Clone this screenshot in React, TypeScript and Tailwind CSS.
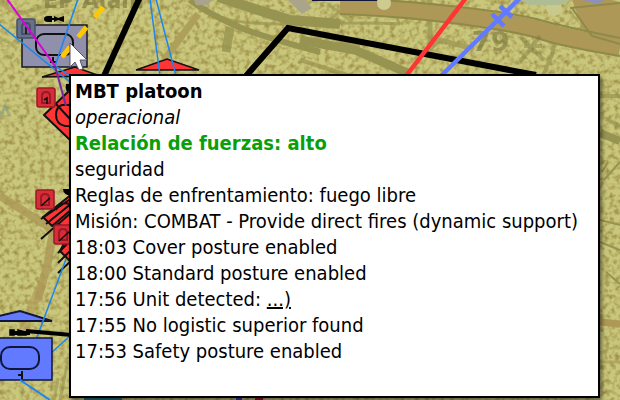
import React from "react";

const events = [
  { time: "18:03", text: "Cover posture enabled" },
  { time: "18:00", text: "Standard posture enabled" },
  { time: "17:56", text: "Unit detected: ", link: "...)" },
  { time: "17:55", text: "No logistic superior found" },
  { time: "17:53", text: "Safety posture enabled" },
];

function Terrain() {
  return (
    <g>
      <rect width="1240" height="800" fill="#c9c77c" />
      <rect width="1240" height="800" filter="url(#speckle)" />
      <g fill="none" stroke="#979350">
        <path d="M190 0 Q206 12 232 24 T320 52" strokeWidth="6" />
        <path d="M202 10 Q228 26 300 24 T400 24" strokeWidth="3" opacity=".7" />
        <path d="M218 -3 L258 10 L290 20 L340 24" strokeWidth="10" />
        <path d="M230 27 L226 52" strokeWidth="9" opacity=".8" />
        <path d="M300 40 L355 50 L410 74" strokeWidth="9" />
        <path d="M300 28 L360 47 M300 60 L350 76" strokeWidth="4" opacity=".7" />
        <path d="M430 0 V48 M415 60 L440 40 L470 48" strokeWidth="5" opacity=".7" />
        <path d="M328 4 L352 22 M350 2 L330 20" strokeWidth="3" opacity=".6" />
        <path d="M556 36 L552 55 L542 78" strokeWidth="4" opacity=".7" />
        <path d="M0 2 L18 14 L70 0" strokeWidth="4" opacity=".5" />
        <path d="M600 133 L620 141" strokeWidth="8" />
        <path d="M606 119 L620 126 M600 96 H620" strokeWidth="4" opacity=".7" />
        <path d="M604 180 L620 162 M602 172 L608 162 M600 220 L620 225 M600 242 L620 250 M606 272 L620 284" strokeWidth="2" />
        <path d="M0 38 L12 44 L28 32" strokeWidth="3" opacity=".5" />
        <path d="M58 378 L54 400 M68 360 L60 400" strokeWidth="3" opacity=".6" />
      </g>
      <path d="M198 14 L164 60" stroke="#aca05a" strokeWidth="7" fill="none" />
      <g fill="none" stroke="#ad9857">
        <path d="M340 6 Q400 8 460 16 T540 30 T620 48" strokeWidth="17" />
        <path d="M575 -4 L620 6 V44 L590 38 Z" strokeWidth="8" fill="#ad9857" />
        <path d="M0 196 L38 220 L53 230 L48 262 L38 300" strokeWidth="8" opacity=".8" />
        <path d="M42 284 Q30 310 24 330" strokeWidth="9" opacity=".6" />
        <path d="M600 322 L620 324" strokeWidth="7" />
        <path d="M600 362 H620" strokeWidth="3" opacity=".7" />
      </g>
      <g fill="none" stroke="#8f8a49" strokeWidth="2">
        <path d="M340 -2 Q400 0 460 7 T540 20 T620 38" />
        <path d="M340 14 Q400 16 460 24 T540 39 T620 56" />
        <path d="M572 8 L592 36 L620 44 M570 8 L620 3" />
      </g>
      <circle cx="384" cy="3" r="7" fill="#cdcb8d" />
      <circle cx="554" cy="8" r="8" fill="#c8c98a" />
      <path d="M288 0 H305 L312 8 L302 14 Z M194 0 H212 L208 5 H196 Z" fill="#aaa58a" />
      <path d="M583 0 H604 L597 4 Z" fill="#8b90bd" />
      <path d="M520 0 H570 L560 5 H530 Z" fill="#aebd94" />
      <rect x="312" y="-4" width="65" height="5" fill="#101638" />
      <g fill="#77733d" opacity=".6" fontFamily="'DejaVu Sans', sans-serif" fontWeight="bold">
        <text x="43" y="8" fontSize="22">EP Alam</text>
        <text x="472" y="51" fontSize="27">79</text>
      </g>
      <path d="M520 36 L544 60 M540 36 L520 62 M524 46 H542" stroke="#77733d" strokeWidth="4" opacity=".4" fill="none" />
      <path d="M0 118 L5 106 L10 116" stroke="#8ba083" strokeWidth="3" fill="none" opacity=".6" />
    </g>
  );
}

function Badge({ x, y, fill, stroke, glyph }: { x: number; y: number; fill: string; stroke: string; glyph: string }) {
  return (
    <g transform={`translate(${x} ${y})`}>
      <rect width="18" height="19" rx="2" fill={fill} stroke={stroke} strokeWidth="1.5" />
      <path d="M5 15 V8 Q5 4 9 4 Q13 4 13 8 V15 Z" fill="none" stroke={stroke} strokeWidth="2" />
      <path d={glyph} fill="none" stroke="#111" strokeWidth="1.6" />
    </g>
  );
}

function BattleMap() {
  return (
    <svg className="absolute inset-0 h-full w-full" viewBox="0 0 620 400" preserveAspectRatio="xMinYMin slice" aria-hidden="true">
      <defs>
        <filter id="speckle" x="0" y="0" width="100%" height="100%" colorInterpolationFilters="sRGB">
          <feTurbulence type="fractalNoise" baseFrequency="0.2" numOctaves="2" seed="8" />
          <feColorMatrix values="0 0 0 0 .62  0 0 0 0 .56  0 0 0 0 .28  2.4 0 0 0 -1" />
        </filter>
      </defs>
      <Terrain />
      <g fill="none" stroke="#000">
        <path d="M140 -3 L104 76" strokeWidth="6" />
        <path d="M246 76 L288 28 L536 75" strokeWidth="6" />
      </g>
      <path d="M466 -2 L406 76" stroke="#ff3434" strokeWidth="4.5" fill="none" />
      <path d="M520 -2 L441 76 M492 14 L504 26 M500 6 L512 17" stroke="#627aff" strokeWidth="4.5" fill="none" />

      <path d="M136 70 L167 59 L199 70 Z" fill="#ff3434" stroke="#111" strokeWidth="1.5" />
      <path d="M150 -1 L160 76 M156 -1 L176 76" stroke="#1c86ee" strokeWidth="1.5" fill="none" />

      <rect x="22" y="25" width="65" height="42" fill="#9090ac" stroke="#171724" strokeWidth="1.5" />
      <rect x="36" y="34" width="37" height="21" rx="8" fill="none" stroke="#111" strokeWidth="2" />
      <path d="M53 57 V63 M50 62 H56" stroke="#111" strokeWidth="2" />
      <path d="M44 19 Q44 16 48 16 H52 V22 H48 Q44 22 44 19 M54 16 L58 18 L64 16 V22 L58 20 L54 22 Z" fill="#000" />
      <path d="M50 19 H64" stroke="#000" strokeWidth="2" />
      <Badge x={17} y={19} fill="#66718c" stroke="#465166" glyph="M9 8 V15" />

      <path d="M42 77 L75 67 L100 76 Z" fill="#ff3434" stroke="#111" strokeWidth="1.5" />
      <path d="M66 84 H72 V95 Q64 92 66 84" fill="#000" />
      <path d="M72 88 L44 115 L72 142 Z" fill="#ff3434" stroke="#111" strokeWidth="2" />
      <path d="M72 105 H62 Q56 107 56 115 Q56 124 65 126 H72 M56 104 L70 119" fill="none" stroke="#111" strokeWidth="2" />
      <Badge x={37} y={88} fill="#d62d39" stroke="#9c1824" glyph="M7 12 L10 10 V16" />

      <path d="M63 189 H72 V196 Q63 195 63 189" fill="#000" />
      <path d="M72 194 L43 217 L52 226 L59 224 L72 240 Z" fill="#ff3434" stroke="#111" strokeWidth="2" />
      <path d="M72 228 L60 251 L72 263 Z" fill="#ff3434" stroke="#111" strokeWidth="2" />
      <path d="M41 219 L72 198 M46 224 L72 203 M41 239 L72 212 M52 226 L72 209 M58 253 L72 239 M58 263 L72 249 M58 273 L72 260 M56 210 Q60 201 70 204" stroke="#111" strokeWidth="2" fill="none" />
      <Badge x={36} y={190} fill="#d62d39" stroke="#9c1824" glyph="M5 16 L14 8" />
      <Badge x={54} y={225} fill="#d62d39" stroke="#9c1824" glyph="M5 16 L16 6" />

      <path d="M-22 321 L20 311 L52 321 Z" fill="#627aff" stroke="#101638" strokeWidth="2" />
      <path d="M66 259 L36 340 M72 334 L50 354" stroke="#1c86ee" strokeWidth="1.5" fill="none" />
      <rect x="-13" y="338" width="65" height="42" fill="#627aff" stroke="#101638" strokeWidth="1.5" />
      <rect x="1" y="347" width="38" height="22" rx="9" fill="none" stroke="#101638" strokeWidth="2" />
      <path d="M22 371 V379 M18 375 H22" stroke="#111" strokeWidth="2" />
      <path d="M20 380 L50 400" stroke="#1c86ee" strokeWidth="2" fill="none" />
      <path d="M10 330 L14 330 V335 H10 Z M18 330 L26 332 V335 H18 Z" fill="#000" stroke="#000" strokeWidth="1.5" />
      <path d="M14 333 H30 M26 331 L72 335" stroke="#000" strokeWidth="4" fill="none" />

      <path d="M-1 24 L70 82 M78 -1 L55 66 L70 76" stroke="#1c86ee" strokeWidth="1.6" fill="none" />
      <path d="M7 -1 L55 66" stroke="#dd00dd" strokeWidth="2" fill="none" />
      <path d="M55 66 L66 106" stroke="#7328a0" strokeWidth="2" fill="none" />
      <path d="M103 7 L62 57" stroke="#ffc800" strokeWidth="5" strokeDasharray="13 13" fill="none" />
      <g>
        <rect x="84" y="397" width="38" height="4" fill="#247785" />
        <rect x="236" y="397" width="6" height="4" fill="#3340bb" />
        <rect x="255" y="397" width="8" height="4" fill="#a51428" />
      </g>
    </svg>
  );
}

function Cursor() {
  return (
    <svg className="absolute left-[69px] top-[42px] h-[30px] w-[20px]" viewBox="0 0 20 30" aria-hidden="true">
      <path d="M1 1 V25 L6 20 L10 28 L14 27 L11 18 H18 Z" fill="#fff" stroke="#555565" strokeWidth="1" />
    </svg>
  );
}

export default function App() {
  return (
    <main className="relative min-h-screen overflow-hidden bg-[#c8c67c]">
      <BattleMap />
      <section
        role="tooltip"
        className="absolute left-[69px] top-[74px] whitespace-nowrap border-2 border-black bg-white pt-0.5 pr-5 pb-8 pl-1 font-['DejaVu_Sans_Condensed','DejaVu_Sans',sans-serif] text-[20px] leading-[26px] text-black shadow-[2px_3px_4px_rgba(0,0,0,0.5)]"
      >
        <h1 className="font-bold">MBT platoon</h1>
        <p className="italic">operacional</p>
        <p className="font-bold text-[#0a9f0a]">Relación de fuerzas: alto</p>
        <p>seguridad</p>
        <p>Reglas de enfrentamiento: fuego libre</p>
        <p>Misión: COMBAT - Provide direct fires (dynamic support)</p>
        <ul>
          {events.map((event) => (
            <li key={event.time}>
              <time>{event.time}</time> {event.text}
              {event.link && (
                <a href="#unit" className="underline">
                  {event.link}
                </a>
              )}
            </li>
          ))}
        </ul>
      </section>
      <Cursor />
    </main>
  );
}
